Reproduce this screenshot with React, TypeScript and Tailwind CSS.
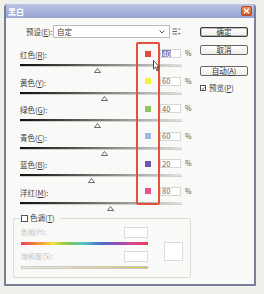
import React from "react";

type Row = { name: string; key: string; value: number; color: string; selected?: boolean };

const rows: Row[] = [
  { name: "红色", key: "R", value: 40, color: "#e8473d", selected: true },
  { name: "黄色", key: "Y", value: 60, color: "#f6f23c" },
  { name: "绿色", key: "G", value: 40, color: "#8fc45a" },
  { name: "青色", key: "C", value: 60, color: "#9dbde8" },
  { name: "蓝色", key: "B", value: 20, color: "#6a55a8" },
  { name: "洋红", key: "M", value: 80, color: "#e8508f" },
];

function Thumb() {
  return (
    <svg width="7" height="5" viewBox="0 0 7 5">
      <path d="M3.5 0.5 L6.5 4.5 L0.5 4.5 Z" fill="#ffffff" stroke="#444" strokeWidth="0.8" />
    </svg>
  );
}

function SliderRow({ r }: { r: Row }) {
  const offset = ((r.value + 200) / 500) * 162;
  return (
    <div className="h-[27.5px] pl-[7px]">
      <div className="flex items-center h-[9px]">
        <span className="w-[125px] text-[7.5px] leading-none mt-[3px] whitespace-nowrap">
          {r.name}(<span className="underline">{r.key}</span>):
        </span>
        <span className="w-[6px] h-[6px]" style={{ backgroundColor: r.color }} />
        <span className="ml-[9px] w-[21px] h-[9px] border border-[#d6d6d2] bg-white flex items-center pl-[1px] text-[7.5px] leading-none text-[#666]">
          {r.selected ? (
            <span className="bg-[#7b7fc6] text-white px-[0.5px]">{r.value}</span>
          ) : (
            <span>{r.value}</span>
          )}
        </span>
        <span className="ml-[4px] text-[7px] leading-none text-[#555]">%</span>
      </div>
      <div className="relative mt-[6px] w-[162px] h-[3px] bg-gradient-to-r from-[#111] via-[#7d7a76] to-[#e4e4e2] border-b border-[#d0d0cc]">
        <div className="absolute top-[4px] w-[7px] h-[5px] flex" style={{ left: `${offset - 3.5}px` }}>
          <Thumb />
        </div>
      </div>
    </div>
  );
}

function Button({ children, def }: { children: React.ReactNode; def?: boolean }) {
  return (
    <div
      className={
        "h-[10px] w-[48px] flex items-center justify-center rounded-[2px] bg-gradient-to-b from-white to-[#ecece9] text-[7.5px] leading-none text-[#333] " +
        (def ? "border border-[#3d3d3d] shadow-[inset_0_0_0_0.5px_#888]" : "border border-[#666]")
      }
    >
      {children}
    </div>
  );
}

export default function App() {
  return (
    <div className="relative w-[264px] h-[294px] overflow-hidden bg-[#efefec] pt-[4px] pl-[4px] font-['Noto_Sans_CJK_SC','Liberation_Sans',sans-serif] text-[#3e3e3e]">
      <div className="w-[252px] h-[282px] flex flex-col border-x-2 border-b-2 border-[#7a7f9a] rounded-t-[4px] bg-[#f9f9f7]">
        {/* title bar */}
        <div className="h-[14px] flex items-center justify-between bg-gradient-to-b from-[#bcc4e4] to-[#98a3d2] pl-[2px] pr-[2px] rounded-t-[3px]">
          <span className="text-[8px] leading-none text-white font-bold mt-[1px]">黑白</span>
          <div className="w-[11px] h-[10px] rounded-[2px] bg-gradient-to-b from-[#f0935e] to-[#d4572c] border border-[#b04a2a] flex items-center justify-center">
            <svg width="7" height="6" viewBox="0 0 7 6">
              <path d="M1 0.8 L6 5.2 M6 0.8 L1 5.2" stroke="#fff" strokeWidth="1.4" />
            </svg>
          </div>
        </div>

        {/* body */}
        <div className="flex flex-1">
          {/* left column */}
          <div className="ml-[7px] w-[179px] flex flex-col">
            <div className="mt-[7px] h-[13px] flex items-center">
              <span className="ml-[13px] w-[27px] text-[7.5px] leading-none whitespace-nowrap">
                预设(<span className="underline">E</span>):
              </span>
              <div className="w-[117px] h-[13px] border border-[#bdbdb8] bg-white flex items-center justify-between pl-[3px] pr-[4px]">
                <span className="text-[7.5px] leading-none">自定</span>
                <svg width="6" height="4" viewBox="0 0 6 4">
                  <path d="M0.5 0.5 L3 3 L5.5 0.5" fill="none" stroke="#555" strokeWidth="1" />
                </svg>
              </div>
              <svg className="ml-[2px]" width="9" height="8" viewBox="0 0 9 8">
                <path d="M0.5 1 H5 M0.5 3.5 H5 M0.5 6 H5" stroke="#555" strokeWidth="0.9" />
                <path d="M6 5 L8.5 5 L7.25 6.8 Z" fill="#555" />
                <path d="M6.3 1 H8.3" stroke="#555" strokeWidth="0.9" />
              </svg>
            </div>

            <div className="mt-[11px]">
              {rows.map((r) => (
                <SliderRow key={r.key} r={r} />
              ))}
            </div>

            <fieldset className="w-[172px] border border-[#dcdcd8] rounded-[2px] px-[7px] pb-[8px]">
              <legend className="h-[8px] flex items-center pr-[5px]">
                <span className="w-[7px] h-[7px] border border-[#555] bg-white" />
                <span className="ml-[2px] text-[7.5px] leading-none">
                  色调(<span className="underline">T</span>)
                </span>
              </legend>
              <div className="flex">
                <div className="w-[127px] flex flex-col">
                  <div className="mt-[5px] h-[11px] flex items-center justify-between">
                    <span className="text-[7px] leading-none text-[#c4c4c0]">色相(H):</span>
                    <span className="w-[24px] h-[11px] border border-[#dadad6] bg-white" />
                  </div>
                  <div className="mt-[4px] h-[3px] bg-[linear-gradient(to_right,#e8405a,#f08a3a,#f2e040,#7cc850,#50c0c8,#4a70d0,#8a50b8,#d84890,#e8405a)]" />
                  <div className="mt-[6px] h-[11px] flex items-center justify-between">
                    <span className="text-[7px] leading-none text-[#c4c4c0]">饱和度(S):</span>
                    <span className="w-[24px] h-[11px] border border-[#dadad6] bg-white" />
                  </div>
                  <div className="mt-[4px] h-[3px] border border-[#c8c8c4] bg-gradient-to-r from-[#f2f2ee] to-[#e2b84c]" />
                </div>
                <div className="ml-[16px] mt-[20px] w-[19px] h-[19px] border border-[#dadad6] bg-white" />
              </div>
            </fieldset>
          </div>

          {/* right column */}
          <div className="ml-[8px] w-[48px] flex flex-col">
            <div className="mt-[9px]">
              <Button def>确定</Button>
            </div>
            <div className="mt-[8px]">
              <Button>取消</Button>
            </div>
            <div className="mt-[11px]">
              <Button>
                自动(<span className="underline">A</span>)
              </Button>
            </div>
            <div className="mt-[8px] h-[8px] flex items-center">
              <span className="w-[6px] h-[6px] border border-[#555] bg-white flex items-center justify-center">
                <svg width="5" height="5" viewBox="0 0 5 5">
                  <path d="M0.8 2.5 L2 3.8 L4.3 1" fill="none" stroke="#333" strokeWidth="0.9" />
                </svg>
              </span>
              <span className="ml-[3px] text-[7.5px] leading-none">
                预览(<span className="underline">P</span>)
              </span>
            </div>
          </div>
        </div>
      </div>

      {/* annotation rectangle */}
      <div className="absolute left-[136px] top-[42px] w-[24px] h-[163px] border-2 border-[#e4503d] rounded-[2px]" />

      {/* mouse cursor */}
      <svg className="absolute left-[153px] top-[60px]" width="7" height="12" viewBox="0 0 7 12">
        <path d="M0.5 0.5 L0.5 9 L2.5 7.2 L4 10.8 L5.3 10.2 L3.9 6.8 L6.3 6.8 Z" fill="#fff" stroke="#222" strokeWidth="0.8" />
      </svg>
    </div>
  );
}
